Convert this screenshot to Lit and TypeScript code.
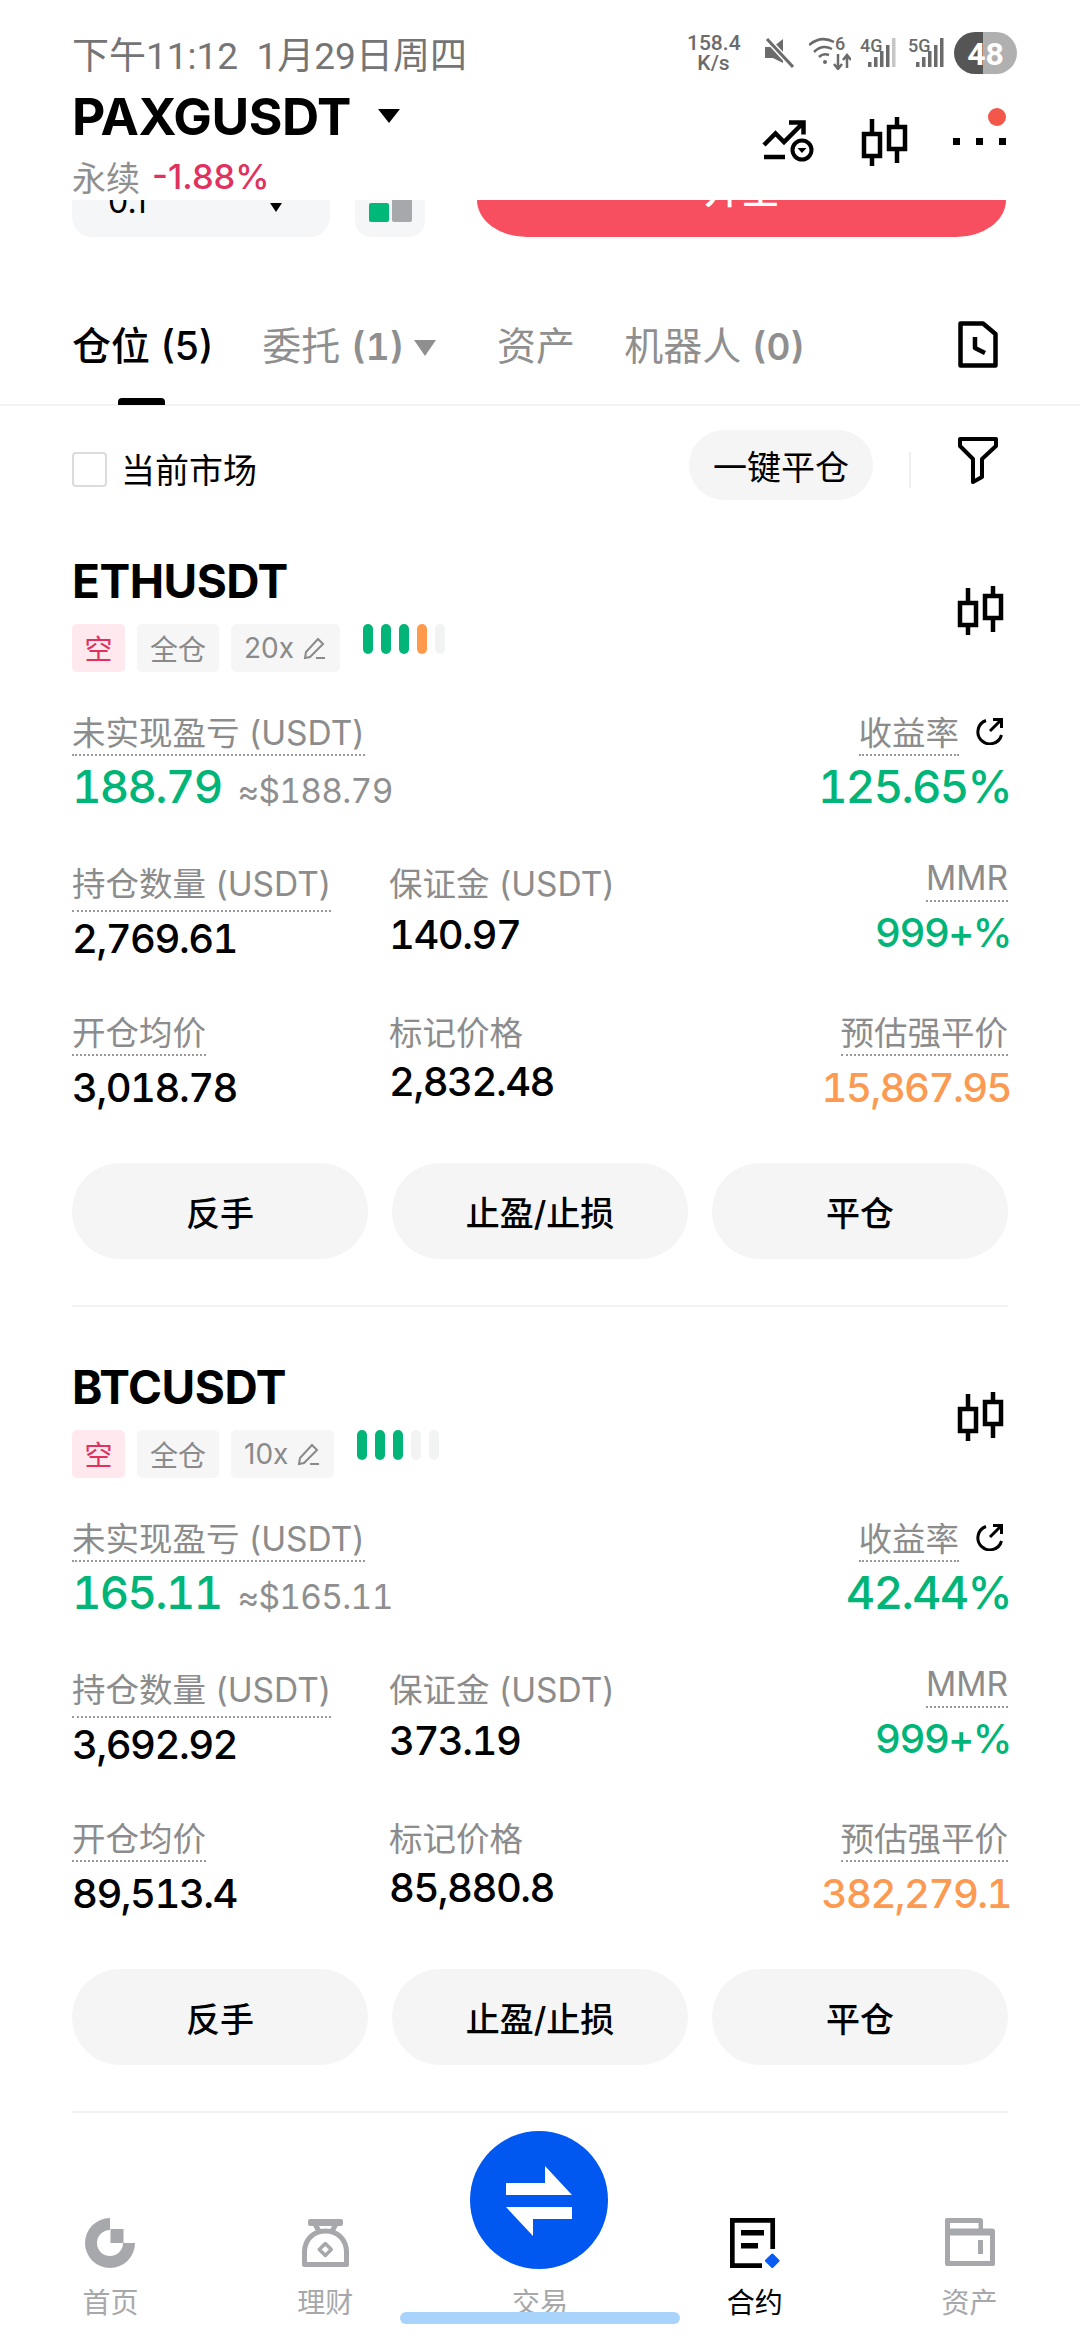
import { LitElement, html, css, svg } from 'lit';
import { customElement } from 'lit/decorators.js';

type Cell = { label: string; value: string; tone?: string; dotted?: boolean; cls?: string };
type Position = {
  symbol: string;
  leverage: string;
  bars: string[];
  pnl: string;
  pnlUsd: string;
  rate: string;
  cells: Cell[];
};

const positions: Position[] = [
  {
    symbol: 'ETHUSDT',
    leverage: '20x',
    bars: ['g', 'g', 'g', 'o', 'e'],
    pnl: '188.79',
    pnlUsd: '≈$188.79',
    rate: '125.65%',
    cells: [
      { label: '持仓数量 (USDT)', value: '2,769.61', dotted: true, cls: 'wide' },
      { label: '保证金 (USDT)', value: '140.97' },
      { label: 'MMR', value: '999+%', tone: 'green', dotted: true, cls: 'right latin' },
      { label: '开仓均价', value: '3,018.78', dotted: true },
      { label: '标记价格', value: '2,832.48' },
      { label: '预估强平价', value: '15,867.95', tone: 'orange', dotted: true, cls: 'right' },
    ],
  },
  {
    symbol: 'BTCUSDT',
    leverage: '10x',
    bars: ['g', 'g', 'g', 'e', 'e'],
    pnl: '165.11',
    pnlUsd: '≈$165.11',
    rate: '42.44%',
    cells: [
      { label: '持仓数量 (USDT)', value: '3,692.92', dotted: true, cls: 'wide' },
      { label: '保证金 (USDT)', value: '373.19' },
      { label: 'MMR', value: '999+%', tone: 'green', dotted: true, cls: 'right latin' },
      { label: '开仓均价', value: '89,513.4', dotted: true },
      { label: '标记价格', value: '85,880.8' },
      { label: '预估强平价', value: '382,279.1', tone: 'orange', dotted: true, cls: 'right' },
    ],
  },
];

const candle = (cls = '') => html`<svg class=${cls} width="48" height="50" viewBox="0 0 48 50" fill="none" stroke="#000" stroke-width="4.5">
  <rect x="4" y="18" width="16" height="22" /><path d="M12 3v15M12 40v10" />
  <rect x="29" y="11" width="16" height="22" /><path d="M37 1v10M37 33v14" />
</svg>`;

const grey = '#a6a8ab';
const navIcons = {
  home: svg`<path d="M25 0A25 25 0 1 0 50 25H38A13 13 0 1 1 25 12Z" fill=${grey}/><rect x="25.500" y="11" width="13" height="14" fill=${grey}/>`,
  earn: svg`<g transform="translate(2 1)" fill="none" stroke=${grey} stroke-width="5" stroke-linejoin="round">
    <path d="M2.500 45.500V33C2.500 20 12 12 23.500 12S44.500 20 44.500 33V45.500Z"/>
    <path d="M13 5l5 9M34 5l-5 9"/><path d="M23.300 24.500l6 6-6 6-6-6z" stroke-width="3.500"/>
    <rect x="8" y="2" width="31" height="3" stroke-width="4"/></g>`,
  futures: svg`<path d="M42.700 31V2.300H2.300V47.700H32" fill="none" stroke="#000" stroke-width="4.700"/><rect x="11" y="12" width="23" height="5.500" fill="#000"/><rect x="11" y="25" width="17" height="5.500" fill="#000"/><path d="M42.300 37L48 42.700 42.300 48.500 36.500 42.700Z" fill="#0a5cf5" stroke="#0a5cf5" stroke-width="3" stroke-linejoin="round"/>`,
  assets: svg`<path fill-rule="evenodd" fill=${grey} d="M0 2Q0 0 2 0H35Q38 0 38 3V10.500H47Q50 10.500 50 13V46Q50 48 47 48H2Q0 48 0 46ZM5 5V10.500H33.500V5ZM5 17.500V43H45V17.500Z"/><rect x="33" y="22" width="5" height="14" fill=${grey}/>`,
};

const nav = [
  { label: '首页', icon: navIcons.home },
  { label: '理财', icon: navIcons.earn },
  { label: '交易', icon: null },
  { label: '合约', icon: navIcons.futures, active: true },
  { label: '资产', icon: navIcons.assets },
];

@customElement('app-root')
export class AppRoot extends LitElement {
  static styles = css`
    :host {
      display: block;
      height: 2340px;
      overflow: hidden;
      position: relative;
      background: #fff;
      color: #000;
      font-family: Inter, 'Noto Sans CJK SC', sans-serif;
    }
    .top { padding: 32px 72px 0; }
    .status { height: 48px; display: flex; align-items: flex-start; color: #757575; }
    .time { font-size: 37px; line-height: 50px; flex: 1; font-family: Roboto, 'Noto Sans CJK SC', sans-serif; }
    .sys { display: flex; align-items: center; height: 42px; margin-right: -9px; }
    .speed { font: 500 21px/20px Roboto, sans-serif; text-align: center; width: 53px; margin-right: 24px; color: #6b6b6b; }
    .sys svg { display: block; flex: none; }
    .sys text { font-family: Roboto, sans-serif; font-weight: 500; }
    .mute { margin-right: 15px; }
    .wifi { margin-right: 9px; }
    .signal { margin-right: 11px; }
    .signal + .signal { margin-right: 9px; }
    .title-row { height: 72px; display: flex; align-items: center; }
    .pair { font-size: 51.500px; font-weight: 700; letter-spacing: -0.5px; }
    .caret { width: 0; height: 0; border: 11px solid transparent; border-top: 14px solid #000; border-bottom: 0; margin-left: 27px; }
    .tools { margin-left: auto; display: flex; align-items: center; position: relative; top: 27px; }
    .trend { margin-right: 42px; }
    .tools .lift { position: relative; top: -2px; }
    .dots { display: flex; gap: 16px; margin-left: 45px; margin-right: 2px; position: relative; top: -2px; }
    .dots i { width: 7px; height: 7px; background: #000; }
    .badge { position: absolute; right: 2px; top: -10px; width: 18px; height: 18px; border-radius: 50%; background: #f25749; }
    .sub { height: 48px; display: flex; align-items: center; gap: 12px; font-size: 34px; color: #8f8f8f; }
    .sub b { font-weight: 500; color: #e0315f; font-size: 34.500px; }

    .clip { height: 37px; padding: 0 74px 0 72px; display: flex; overflow: hidden; }
    .select { width: 258px; background: #f5f6f7; border-radius: 0 0 20px 20px; position: relative; font-size: 32px; }
    .select span { position: absolute; left: 36px; top: -18px; line-height: 40px; }
    .select i { position: absolute; right: 48px; top: 3px; border: 6px solid transparent; border-top: 9px solid #000; border-bottom: 0; }
    .ratio { width: 70px; margin-left: 25px; background: #f5f6f7; border-radius: 0 0 16px 16px; display: flex; justify-content: center; gap: 3px; align-items: flex-start; }
    .ratio i { width: 20px; height: 22px; background: #a6a8ab; border-radius: 0 0 2px 2px; }
    .ratio i:first-child { background: #00b978; height: 19px; margin-top: 3px; border-radius: 2px; }
    .open { margin-left: 52px; flex: 1; background: #f84f60; border-radius: 0 0 50px 50px / 0 0 37px 37px; color: #fff; text-align: center; font-size: 38px; font-weight: 500; line-height: 40px; overflow: hidden; }
    .open span { display: block; margin-top: -31px; }

    .tabs { height: 169px; box-sizing: border-box; padding: 84px 72px 0; display: flex; align-items: flex-start; gap: 49px; border-bottom: 2px solid #f2f2f2; position: relative; font-size: 39px; line-height: 50px; color: #8f8f8f; }
    .tabs b { font-weight: 600; font-size: 37px; font-variant-numeric: tabular-nums; }
    .tabs .on { color: #000; font-weight: 500; }
    .tabs .on::after { content: ''; position: absolute; left: 118px; bottom: -1px; width: 47px; height: 7px; background: #000; border-radius: 4px 4px 0 0; }
    .tab-caret { display: inline-block; border: 11px solid transparent; border-top: 16px solid #8f8f8f; border-bottom: 0; margin-left: 10px; margin-right: 12px; vertical-align: 4px; }
    .tabs svg { margin-left: auto; margin-right: 10px; }

    .filter { height: 70px; margin-top: 24px; padding: 0 82px 0 72px; display: flex; align-items: center; }
    .check { width: 31px; height: 31px; border: 2px solid #dcdcdc; border-radius: 4px; margin-top: 8px; }
    .market { margin-left: 14px; font-size: 34px; margin-top: 6px; flex: 1; }
    .close-all { height: 70px; width: 184px; border-radius: 35px; background: #f5f5f5; font-size: 34px; display: flex; align-items: center; justify-content: center; }
    .sep { width: 2px; height: 36px; background: #efefef; margin: 10px 47px 0 36px; }
    .funnel { margin-top: -10px; }

    .list { padding: 0 72px; }
    .card { padding-top: 56px; height: 807px; box-sizing: border-box; border-bottom: 2px solid #f2f2f2; }
    .card + .card { padding-top: 55px; height: 806px; }
    .head { display: flex; justify-content: space-between; align-items: center; }
    .symbol { font-size: 46px; font-weight: 700; line-height: 50px; letter-spacing: -0.5px; }
    .tags { display: flex; gap: 12px; margin-top: 18px; height: 48px; }
    .tag { display: flex; align-items: center; justify-content: center; padding: 0 13px; background: #f6f6f6; border-radius: 5px; color: #8a8a8a; font-size: 28px; gap: 8px; }
    .tag svg { margin-right: 1px; }
    .tag.short { background: #ffe8ee; color: #e0315f; padding: 0 8px; width: 37px; }
    .bars { display: flex; gap: 8px; margin-left: 11px; }
    .bars i { width: 10px; height: 30px; border-radius: 5px; background: #f2f3f3; }
    .bars .g { background: #00b577; }
    .bars .o { background: #ff9a4d; }
    .card-chart { margin: -8px 4px 0 0; }

    .pnl { display: flex; justify-content: space-between; margin-top: 41px; }
    .col { display: flex; flex-direction: column; align-items: flex-start; }
    .col.end { align-items: flex-end; }
    .label { font-size: 33.500px; line-height: 40px; color: #8c8c8c; white-space: nowrap; }
    .label.dotted { border-bottom: 2px dotted #999; padding-bottom: 1px; }
    .label-row { display: flex; align-items: flex-start; gap: 17px; }
    .label-row svg { margin: 5px 5px 0 0; }
    .big { font-size: 45.500px; font-weight: 500; line-height: 50px; margin-top: 6px; font-variant-numeric: tabular-nums; letter-spacing: -1.7px; }
    .col.end .big { margin-right: -3px; }
    .green { color: #00b577; }
    .orange { color: #fb9a50; }
    .usd { font-size: 33.500px; font-weight: 400; color: #8f8f8f; margin-left: 16px; letter-spacing: -0.7px; }

    .grid { display: grid; grid-template-columns: 317px 1fr 1fr; row-gap: 51px; margin-top: 48px; }
    .cell { display: flex; flex-direction: column; align-items: flex-start; }
    .cell.right { align-items: flex-end; }
    .cell.right .num { margin-right: -3px; }
    .num { font-size: 40px; font-weight: 500; line-height: 46px; margin-top: 9px; font-variant-numeric: tabular-nums; letter-spacing: -1.5px; }
    .label:not(.dotted) + .num { margin-top: 6px; }
    .cell:nth-child(2) .num { margin-top: 8px; }
    .cell.wide .label { padding-bottom: 6px; }
    .cell.wide .num { margin-top: 4px; }
    .cell.latin .label { line-height: 36px; padding-bottom: 4px; margin-top: -4px; }
    .cell.latin .num { margin-top: 8px; }

    .actions { display: flex; gap: 24px; margin-top: 52px; }
    .actions div { flex: 1; height: 96px; border-radius: 48px; background: #f5f5f5; display: flex; align-items: center; justify-content: center; font-size: 34px; font-weight: 500; }

    .nav { padding: 105px 3px 0; display: grid; grid-template-columns: repeat(5, 1fr); position: relative; }
    .nav-item { display: flex; flex-direction: column; align-items: center; color: #a6a8ab; font-size: 28px; line-height: 36px; }
    .nav-item svg { height: 50px; margin-bottom: 17px; }
    .nav-item.active { color: #000; }
    .spacer { height: 50px; margin-bottom: 17px; }
    .fab { position: absolute; left: 470px; top: 18px; width: 138px; height: 138px; }
    .pill { position: absolute; left: 400px; top: 2312px; width: 280px; height: 12px; border-radius: 6px; background: #a8d3fb; }
  `;

  private signal(name: string, last: string) {
    return html`<svg class="signal" width="37" height="32" viewBox="0 0 37 32">
      <text x="0" y="15" font-size="18" fill="#6b6b6b">${name}</text>
      <rect x="8" y="25" width="3.500" height="5" fill="#6b6b6b" /><rect x="14" y="20" width="3.500" height="10" fill="#6b6b6b" /><rect x="20" y="14" width="3.500" height="16" fill="#6b6b6b" /><rect x="26" y="8" width="3.500" height="22" fill="#6b6b6b" /><rect x="32" y="1" width="3.500" height="29" fill=${last} />
    </svg>`;
  }

  private statusIcons() {
    return html`
      <svg class="mute" width="30" height="30" viewBox="0 0 30 30">
        <path d="M1 9h8l10-8v24L9 20H1z" fill="#6b6b6b" /><path d="M3 1l25 27" stroke="#fff" stroke-width="6" /><path d="M3 1l26 28" stroke="#6b6b6b" stroke-width="3" />
      </svg>
      <svg class="wifi" width="42" height="34" viewBox="0 0 42 34" fill="none" stroke="#6b6b6b" stroke-width="2.500">
        <path d="M0 9Q12-1 25 6M5 16Q13 8 23 13M10 21Q14 17 20 19" />
        <circle cx="16" cy="26" r="2" fill="#6b6b6b" stroke="none" />
        <text x="26" y="14" font-size="18" fill="#6b6b6b" stroke="none">6</text>
        <path d="M29 18v14M25 28l4 5 4-5M38 32V20M34 24l4-5 4 5" stroke-width="2.500" />
      </svg>
      ${this.signal('4G', '#c6c6c6')}
      ${this.signal('5G', '#6b6b6b')}
      <svg width="63" height="42" viewBox="0 0 63 42">
        <defs><clipPath id="batt"><rect width="63" height="42" rx="21" /></clipPath></defs>
        <g clip-path="url(#batt)"><rect width="29" height="42" fill="#555" /><rect x="29" width="34" height="42" fill="#b0b0b0" /></g>
        <text x="31.500" y="33" text-anchor="middle" font-size="32" fill="#fff" style="font-weight:700">48</text>
      </svg>
    `;
  }

  private renderCard(p: Position) {
    return html`
      <section class="card">
        <div class="head">
          <div>
            <div class="symbol">${p.symbol}</div>
            <div class="tags">
              <span class="tag short">空</span>
              <span class="tag">全仓</span>
              <span class="tag">${p.leverage}
                <svg width="24" height="24" viewBox="0 0 24 24" fill="none" stroke="#8a8a8a" stroke-width="2"><path d="M3 22l1-6L16 3l5 5L8 21zM14 22h9" /></svg>
              </span>
              <div class="bars">${p.bars.map((b) => html`<i class=${b}></i>`)}</div>
            </div>
          </div>
          ${candle('card-chart')}
        </div>
        <div class="pnl">
          <div class="col">
            <span class="label dotted">未实现盈亏 (USDT)</span>
            <div class="big green">${p.pnl}<span class="usd">${p.pnlUsd}</span></div>
          </div>
          <div class="col end">
            <div class="label-row">
              <span class="label dotted">收益率</span>
              <svg width="27" height="27" viewBox="0 0 27 27" fill="none" stroke="#000" stroke-width="3"><path d="M10 2.500A12 12 0 1 0 25.500 17M14 13L25 2M17 1.500h8.500V10" /></svg>
            </div>
            <div class="big green">${p.rate}</div>
          </div>
        </div>
        <div class="grid">
          ${p.cells.map(
            (c) => html`<div class="cell ${c.cls ?? ''}">
              <span class="label ${c.dotted ? 'dotted' : ''}">${c.label}</span>
              <div class="num ${c.tone ?? ''}">${c.value}</div>
            </div>`,
          )}
        </div>
        <div class="actions"><div>反手</div><div>止盈/止损</div><div>平仓</div></div>
      </section>
    `;
  }

  render() {
    return html`
      <div class="top">
        <div class="status">
          <div class="time">下午11:12 &nbsp;1月29日周四</div>
          <div class="sys"><div class="speed">158.4<br />K/s</div>${this.statusIcons()}</div>
        </div>
        <div class="title-row">
          <span class="pair">PAXGUSDT</span><i class="caret"></i>
          <div class="tools">
            <svg class="trend" width="56" height="50" viewBox="0 0 56 50" fill="none" stroke="#000" stroke-width="4.500">
              <path d="M2 27L13.500 15.500 22 24 39 7M27 4.500h14.500v12M2 39h21" />
              <circle cx="40" cy="32" r="9.500" stroke-width="4" /><path d="M35.500 30h9L40 35z" fill="#000" stroke="none" />
            </svg>
            ${candle('lift')}
            <div class="dots"><i></i><i></i><i></i></div>
            <span class="badge"></span>
          </div>
        </div>
        <div class="sub">永续 <b>-1.88%</b></div>
      </div>

      <div class="clip">
        <div class="select"><span>0.1</span><i></i></div>
        <div class="ratio"><i></i><i></i></div>
        <div class="open"><span>开空</span></div>
      </div>

      <div class="tabs">
        <span class="on">仓位 (5)</span>
        <span>委托 <b>(1)</b><i class="tab-caret"></i></span>
        <span>资产</span>
        <span>机器人 <b>(0)</b></span>
        <svg width="40" height="47" viewBox="0 0 40 47" fill="none" stroke="#000" stroke-width="4.500" stroke-linejoin="round">
          <path d="M2.500 2.500H25L37.500 13V44.500H2.500Z" /><path d="M17 16V27L27 32" />
        </svg>
      </div>

      <div class="filter">
        <span class="check"></span>
        <span class="market">当前市场</span>
        <span class="close-all">一键平仓</span>
        <span class="sep"></span>
        <svg class="funnel" width="40" height="47" viewBox="0 0 40 47" fill="none" stroke="#000" stroke-width="4" stroke-linejoin="round">
          <path d="M2 2H38V9L24 22V40L15 45V22L2 9Z" />
        </svg>
      </div>

      <div class="list">${positions.map((p) => this.renderCard(p))}</div>

      <nav class="nav">
        ${nav.map(
          (n) => html`<div class="nav-item ${n.active ? 'active' : ''}">
            ${n.icon
              ? html`<svg width="50" height="50" viewBox="0 0 50 50">${n.icon}</svg>`
              : html`<div class="spacer"></div>`}
            <span>${n.label}</span>
          </div>`,
        )}
        <svg class="fab" viewBox="0 0 138 138">
          <circle cx="69" cy="69" r="69" fill="#0058f0" />
          <path d="M36 52H75V35L102 64H36ZM36 76H102V88H63V105Z" fill="#fff" />
        </svg>
      </nav>
      <div class="pill"></div>
    `;
  }
}
